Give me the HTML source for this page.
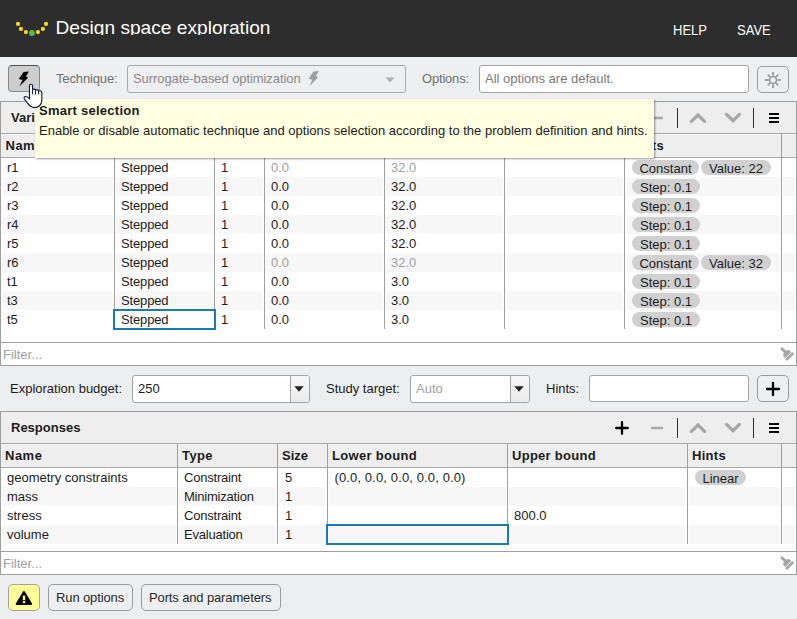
<!DOCTYPE html>
<html><head><meta charset="utf-8"><title>Design space exploration</title>
<style>
*{box-sizing:border-box;margin:0;padding:0}
html,body{width:797px;height:619px;overflow:hidden}
body{position:relative;background:#edeeef;font-family:"Liberation Sans",sans-serif;font-size:13px;color:#1c1c1c}
.abs{position:absolute}
.t{position:absolute;white-space:nowrap;line-height:16px;height:16px}
.g{color:#6f6f6f}
.dis{color:#a0a0a0}
#hdr{left:0;top:0;width:797px;height:57px;background:#2d2d2d}
#title{left:55.5px;top:16px;height:19px;line-height:24px;font-size:19.15px;color:#fff;overflow:hidden}
.hb{color:#fff;font-size:14px;transform:scaleX(0.93);transform-origin:0 0}
.btn{position:absolute;border:1px solid #a8a8a8;border-radius:4px;background:linear-gradient(#f7f7f7,#eaeaea)}
.inp{position:absolute;border:1px solid #a3a3a3;border-radius:3px;background:#fff}
.panel{position:absolute;left:0;width:797px;border:1px solid #9e9e9e;border-bottom:none;background:#fff}
.phead{position:absolute;left:0;top:0;width:795px;height:32px;background:#eeeeef;border-bottom:1px solid #a8a8a8}
.chead{position:absolute;left:0;top:32px;width:795px;height:24px;background:#eeeeef;border-bottom:1px solid #a8a8a8;border-top:1px solid #f6f6f6}
.flat{background:#eeeff0;border-color:#9c9c9c;border-radius:5px}
.b{font-weight:bold}
.row{position:absolute;left:1px;width:793px;height:19px}
.row>.t,.row>.pill{margin-left:-1px}
.vg{position:absolute;width:3px;background:#fff}
.alt{background:#f7f7f7}
.vs{position:absolute;width:1px;background:#a0a0a0}
.pill{position:absolute;height:15px;border-radius:8px;background:#d0d0d0;line-height:16px;padding-top:1px;text-align:center;white-space:nowrap}
.filter{position:absolute;left:0;width:797px;height:24px;border:1px solid #9e9e9e;background:#fff}
</style></head><body>
<div id="hdr" class="abs"></div>
<svg class="abs" style="left:10px;top:16px" width="44" height="24" viewBox="10 16 44 24"><g fill="#f9d825"><circle cx="18" cy="23.9" r="2.1"/><circle cx="20.95" cy="28.9" r="2.1"/><circle cx="25.9" cy="32.1" r="2.1"/><circle cx="37.97" cy="32.1" r="2.1"/><circle cx="42.9" cy="28.9" r="2.1"/><circle cx="46" cy="23.9" r="2.1"/></g><circle cx="31.95" cy="33.1" r="3" fill="#5cb849"/></svg>
<div id="title" class="t">Design space exploration</div>
<div class="t hb" style="left:673px;top:22px">HELP</div>
<div class="t hb" style="left:736.5px;top:22px">SAVE</div>
<div class="abs" style="left:0;top:57px;width:797px;height:44px;background:#eeeff0"></div>
<div class="btn" style="left:8px;top:65px;width:32px;height:27px;background:#cdcdcd;border-color:#555 #8a8a8a #8a8a8a #8a8a8a"></div>
<svg class="abs" style="left:0px;top:57px" width="50" height="40" viewBox="0 57 50 40"><path d="M23.6 71.9 L28.9 71.4 L26 76.4 L28.1 77.7 L19.4 86.5 L22.5 80 L18.7 79 Z" fill="#0a0a0a"/></svg>
<div class="t g" style="left:56px;top:71px;letter-spacing:-0.14px">Technique:</div>
<div class="inp" style="left:127px;top:65px;width:279px;height:28px;background:#eeeff0;border-color:#a8a8a8"></div>
<div class="t" style="left:133px;top:71px;color:#8a8a8a;letter-spacing:-0.08px">Surrogate-based optimization</div>
<svg class="abs" style="left:300px;top:65px" width="30" height="28" viewBox="10.1 65.3 30 28"><path d="M23.6 71.9 L28.9 71.4 L26 76.4 L28.1 77.7 L19.4 86.5 L22.5 80 L18.7 79 Z" fill="#9e9e9e"/></svg>
<svg class="abs" style="left:385px;top:77px" width="10" height="6" viewBox="0 0 10 6"><path d="M0.5 0.5 L9.5 0.5 L5 5.5 Z" fill="#b0b0b0"/></svg>
<div class="t g" style="left:422px;top:71px;letter-spacing:-0.19px">Options:</div>
<div class="inp" style="left:479px;top:65px;width:270px;height:28px"></div>
<div class="t" style="left:485px;top:71px;color:#7a7a7a">All options are default.</div>
<div class="btn flat" style="left:757px;top:66px;width:32px;height:27px"></div>
<svg class="abs" style="left:764px;top:71px" width="18" height="18" viewBox="-9 -9 18 18"><circle r="3.5" fill="none" stroke="#9a9a9a" stroke-width="1.7"/><line x1="4.30" y1="0.00" x2="8.00" y2="0.00" stroke="#9a9a9a" stroke-width="1.8"/><line x1="3.04" y1="3.04" x2="5.37" y2="5.37" stroke="#9a9a9a" stroke-width="1.8"/><line x1="0.00" y1="4.30" x2="0.00" y2="8.00" stroke="#9a9a9a" stroke-width="1.8"/><line x1="-3.04" y1="3.04" x2="-5.37" y2="5.37" stroke="#9a9a9a" stroke-width="1.8"/><line x1="-4.30" y1="0.00" x2="-8.00" y2="0.00" stroke="#9a9a9a" stroke-width="1.8"/><line x1="-3.04" y1="-3.04" x2="-5.37" y2="-5.37" stroke="#9a9a9a" stroke-width="1.8"/><line x1="-0.00" y1="-4.30" x2="-0.00" y2="-8.00" stroke="#9a9a9a" stroke-width="1.8"/><line x1="3.04" y1="-3.04" x2="5.37" y2="-5.37" stroke="#9a9a9a" stroke-width="1.8"/></svg>
<div class="panel" style="top:101px;height:242px">
<div class="phead"></div><div class="chead"></div>
<div class="t b" style="left:10px;top:8px">Variables</div>
<div class="t b" style="left:4.5px;top:36px;letter-spacing:0.5px">Name</div>
<div class="t b" style="left:629px;top:36px;letter-spacing:0.28px">Hints</div>
<div class="row" style="top:56px">
<div class="t" style="left:6px;top:2px">r1</div>
<div class="t" style="left:120px;top:2px;letter-spacing:-0.15px">Stepped</div>
<div class="t" style="left:220px;top:2px">1</div>
<div class="t dis" style="left:270px;top:2px">0.0</div>
<div class="t dis" style="left:390px;top:2px">32.0</div>
<div class="pill" style="left:631px;top:2px;width:67px">Constant</div>
<div class="pill" style="left:700px;top:2px;width:70px">Value: 22</div>
</div>
<div class="row alt" style="top:75px">
<div class="t" style="left:6px;top:2px">r2</div>
<div class="t" style="left:120px;top:2px;letter-spacing:-0.15px">Stepped</div>
<div class="t" style="left:220px;top:2px">1</div>
<div class="t" style="left:270px;top:2px">0.0</div>
<div class="t" style="left:390px;top:2px">32.0</div>
<div class="pill" style="left:631px;top:2px;width:68px">Step: 0.1</div>
</div>
<div class="row" style="top:94px">
<div class="t" style="left:6px;top:2px">r3</div>
<div class="t" style="left:120px;top:2px;letter-spacing:-0.15px">Stepped</div>
<div class="t" style="left:220px;top:2px">1</div>
<div class="t" style="left:270px;top:2px">0.0</div>
<div class="t" style="left:390px;top:2px">32.0</div>
<div class="pill" style="left:631px;top:2px;width:68px">Step: 0.1</div>
</div>
<div class="row alt" style="top:113px">
<div class="t" style="left:6px;top:2px">r4</div>
<div class="t" style="left:120px;top:2px;letter-spacing:-0.15px">Stepped</div>
<div class="t" style="left:220px;top:2px">1</div>
<div class="t" style="left:270px;top:2px">0.0</div>
<div class="t" style="left:390px;top:2px">32.0</div>
<div class="pill" style="left:631px;top:2px;width:68px">Step: 0.1</div>
</div>
<div class="row" style="top:132px">
<div class="t" style="left:6px;top:2px">r5</div>
<div class="t" style="left:120px;top:2px;letter-spacing:-0.15px">Stepped</div>
<div class="t" style="left:220px;top:2px">1</div>
<div class="t" style="left:270px;top:2px">0.0</div>
<div class="t" style="left:390px;top:2px">32.0</div>
<div class="pill" style="left:631px;top:2px;width:68px">Step: 0.1</div>
</div>
<div class="row alt" style="top:151px">
<div class="t" style="left:6px;top:2px">r6</div>
<div class="t" style="left:120px;top:2px;letter-spacing:-0.15px">Stepped</div>
<div class="t" style="left:220px;top:2px">1</div>
<div class="t dis" style="left:270px;top:2px">0.0</div>
<div class="t dis" style="left:390px;top:2px">32.0</div>
<div class="pill" style="left:631px;top:2px;width:67px">Constant</div>
<div class="pill" style="left:700px;top:2px;width:70px">Value: 32</div>
</div>
<div class="row" style="top:170px">
<div class="t" style="left:6px;top:2px">t1</div>
<div class="t" style="left:120px;top:2px;letter-spacing:-0.15px">Stepped</div>
<div class="t" style="left:220px;top:2px">1</div>
<div class="t" style="left:270px;top:2px">0.0</div>
<div class="t" style="left:390px;top:2px">3.0</div>
<div class="pill" style="left:631px;top:2px;width:68px">Step: 0.1</div>
</div>
<div class="row alt" style="top:189px">
<div class="t" style="left:6px;top:2px">t3</div>
<div class="t" style="left:120px;top:2px;letter-spacing:-0.15px">Stepped</div>
<div class="t" style="left:220px;top:2px">1</div>
<div class="t" style="left:270px;top:2px">0.0</div>
<div class="t" style="left:390px;top:2px">3.0</div>
<div class="pill" style="left:631px;top:2px;width:68px">Step: 0.1</div>
</div>
<div class="row" style="top:208px">
<div class="t" style="left:6px;top:2px">t5</div>
<div class="t" style="left:120px;top:2px;letter-spacing:-0.15px">Stepped</div>
<div class="t" style="left:220px;top:2px">1</div>
<div class="t" style="left:270px;top:2px">0.0</div>
<div class="t" style="left:390px;top:2px">3.0</div>
<div class="pill" style="left:631px;top:2px;width:68px">Step: 0.1</div>
</div>
<div class="vg" style="left:112px;top:56px;height:171px"></div>
<div class="vs" style="left:113px;top:32px;height:195px"></div>
<div class="vg" style="left:212px;top:56px;height:171px"></div>
<div class="vs" style="left:213px;top:32px;height:195px"></div>
<div class="vg" style="left:262px;top:56px;height:171px"></div>
<div class="vs" style="left:263px;top:32px;height:195px"></div>
<div class="vg" style="left:382px;top:56px;height:171px"></div>
<div class="vs" style="left:383px;top:32px;height:195px"></div>
<div class="vg" style="left:502px;top:56px;height:171px"></div>
<div class="vs" style="left:503px;top:32px;height:195px"></div>
<div class="vg" style="left:622px;top:56px;height:171px"></div>
<div class="vs" style="left:623px;top:32px;height:195px"></div>
<div class="vg" style="left:779px;top:56px;height:171px"></div>
<div class="vs" style="left:780px;top:32px;height:195px"></div>
<div class="abs" style="left:112px;top:207px;width:103px;height:21px;border:2px solid #1a7ab3;box-shadow:inset 0 0 0 1px #fff"></div>
<svg class="abs" style="left:600px;top:0px" width="195" height="32" viewBox="600 0 195 32"><path d="M621 10.2 V21.8 M615.2 16 H626.8" stroke="#000" stroke-width="2.3" stroke-linecap="round" fill="none"/><path d="M651 16 H661" stroke="#a8a8a8" stroke-width="2.4" stroke-linecap="round" fill="none"/><rect x="676" y="6" width="1" height="20" fill="#2a2a2a"/><path d="M690.4 19.3 L697 13 L703.6 19.3" stroke="#a6a6a6" stroke-width="3.2" stroke-linecap="round" fill="none"/><path d="M725.55 12.4 L732 18.75 L738.45 12.4" stroke="#a6a6a6" stroke-width="3.2" stroke-linecap="round" fill="none"/><rect x="752" y="6" width="1" height="20" fill="#2a2a2a"/><rect x="768" y="11" width="10" height="2" fill="#000"/><rect x="768" y="15" width="10" height="2" fill="#000"/><rect x="768" y="19" width="10" height="2" fill="#000"/></svg>
</div>
<div class="filter" style="top:342px"></div>
<div class="t" style="left:3px;top:347px;color:#a0a0a0">Filter...</div>
<svg class="abs" style="left:770px;top:342px" width="27" height="24" viewBox="770 342 27 24"><g transform="translate(781.1 347.9) rotate(-45)" fill="#a6a6a6"><path d="M-1.4 0 H1.4 V5.2 L4.2 7 V10 H-4.2 V7 L-1.4 5.2 Z"/><rect x="-5" y="10.7" width="10" height="2.9"/></g></svg>
<div class="t" style="left:10px;top:381px">Exploration budget:</div>
<div class="inp" style="left:132px;top:375px;width:178px;height:28px"></div>
<div class="abs" style="left:290px;top:376px;width:19px;height:26px;border-left:1px solid #a3a3a3;background:linear-gradient(#f7f7f7,#ebebeb);border-radius:0 3px 3px 0"></div>
<svg class="abs" style="left:294px;top:386px" width="10" height="6" viewBox="0 0 10 6"><path d="M0.3 0.3 L9.7 0.3 L5 5.7 Z" fill="#222"/></svg>
<div class="t" style="left:138px;top:381px">250</div>
<div class="t" style="left:326px;top:381px">Study target:</div>
<div class="inp" style="left:410px;top:375px;width:120px;height:28px"></div>
<div class="abs" style="left:510px;top:376px;width:19px;height:26px;border-left:1px solid #a3a3a3;background:linear-gradient(#f7f7f7,#ebebeb);border-radius:0 3px 3px 0"></div>
<svg class="abs" style="left:514px;top:386px" width="10" height="6" viewBox="0 0 10 6"><path d="M0.3 0.3 L9.7 0.3 L5 5.7 Z" fill="#222"/></svg>
<div class="t" style="left:416px;top:381px;color:#a0a0a0">Auto</div>
<div class="t" style="left:546px;top:381px">Hints:</div>
<div class="inp" style="left:589px;top:375px;width:160px;height:27px"></div>
<div class="btn flat" style="left:757px;top:375px;width:32px;height:27px"></div>
<svg class="abs" style="left:763px;top:379px" width="20" height="20" viewBox="0 0 20 20"><path d="M10 4 V16 M4 10 H16" stroke="#000" stroke-width="2.3" stroke-linecap="round" fill="none"/></svg>
<div class="panel" style="top:411px;height:141px">
<div class="phead"></div><div class="chead"></div>
<div class="t b" style="left:10px;top:8px">Responses</div>
<div class="t b" style="left:4px;top:36px;letter-spacing:0.5px">Name</div>
<div class="t b" style="left:181px;top:36px;letter-spacing:0.4px">Type</div>
<div class="t b" style="left:281px;top:36px;letter-spacing:0px">Size</div>
<div class="t b" style="left:331px;top:36px;letter-spacing:0.3px">Lower bound</div>
<div class="t b" style="left:511px;top:36px;letter-spacing:0.28px">Upper bound</div>
<div class="t b" style="left:691px;top:36px;letter-spacing:0.28px">Hints</div>
<div class="row" style="top:56px">
<div class="t" style="left:6px;top:2px">geometry constraints</div>
<div class="t" style="left:183px;top:2px;letter-spacing:-0.21px">Constraint</div>
<div class="t" style="left:284px;top:2px">5</div>
<div class="t" style="left:333.5px;top:2px;letter-spacing:0.125px">(0.0, 0.0, 0.0, 0.0, 0.0)</div>
<div class="pill" style="left:694px;top:2px;width:51px">Linear</div>
</div>
<div class="row alt" style="top:75px">
<div class="t" style="left:6px;top:2px">mass</div>
<div class="t" style="left:183px;top:2px;letter-spacing:-0.21px">Minimization</div>
<div class="t" style="left:284px;top:2px">1</div>
</div>
<div class="row" style="top:94px">
<div class="t" style="left:6px;top:2px">stress</div>
<div class="t" style="left:183px;top:2px;letter-spacing:-0.21px">Constraint</div>
<div class="t" style="left:284px;top:2px">1</div>
<div class="t" style="left:513px;top:2px">800.0</div>
</div>
<div class="row alt" style="top:113px">
<div class="t" style="left:6px;top:2px">volume</div>
<div class="t" style="left:183px;top:2px;letter-spacing:-0.21px">Evaluation</div>
<div class="t" style="left:284px;top:2px">1</div>
</div>
<div class="vg" style="left:175px;top:56px;height:76px"></div>
<div class="vs" style="left:176px;top:32px;height:100px"></div>
<div class="vg" style="left:275px;top:56px;height:76px"></div>
<div class="vs" style="left:276px;top:32px;height:100px"></div>
<div class="vg" style="left:325px;top:56px;height:76px"></div>
<div class="vs" style="left:326px;top:32px;height:100px"></div>
<div class="vg" style="left:505px;top:56px;height:76px"></div>
<div class="vs" style="left:506px;top:32px;height:100px"></div>
<div class="vg" style="left:685px;top:56px;height:76px"></div>
<div class="vs" style="left:686px;top:32px;height:100px"></div>
<div class="vg" style="left:779px;top:56px;height:76px"></div>
<div class="vs" style="left:780px;top:32px;height:100px"></div>
<div class="abs" style="left:325px;top:112px;width:183px;height:21px;border:2px solid #1a7ab3;box-shadow:inset 0 0 0 1px #fff"></div>
<svg class="abs" style="left:600px;top:0px" width="195" height="32" viewBox="600 0 195 32"><path d="M621 10.2 V21.8 M615.2 16 H626.8" stroke="#000" stroke-width="2.3" stroke-linecap="round" fill="none"/><path d="M651 16 H661" stroke="#a8a8a8" stroke-width="2.4" stroke-linecap="round" fill="none"/><rect x="676" y="6" width="1" height="20" fill="#2a2a2a"/><path d="M690.4 19.3 L697 13 L703.6 19.3" stroke="#a6a6a6" stroke-width="3.2" stroke-linecap="round" fill="none"/><path d="M725.55 12.4 L732 18.75 L738.45 12.4" stroke="#a6a6a6" stroke-width="3.2" stroke-linecap="round" fill="none"/><rect x="752" y="6" width="1" height="20" fill="#2a2a2a"/><rect x="768" y="11" width="10" height="2" fill="#000"/><rect x="768" y="15" width="10" height="2" fill="#000"/><rect x="768" y="19" width="10" height="2" fill="#000"/></svg>
</div>
<div class="filter" style="top:551px"></div>
<div class="t" style="left:3px;top:556px;color:#a0a0a0">Filter...</div>
<svg class="abs" style="left:770px;top:551px" width="27" height="24" viewBox="770 551 27 24"><g transform="translate(781.1 556.9) rotate(-45)" fill="#a6a6a6"><path d="M-1.4 0 H1.4 V5.2 L4.2 7 V10 H-4.2 V7 L-1.4 5.2 Z"/><rect x="-5" y="10.7" width="10" height="2.9"/></g></svg>
<div class="btn" style="left:8px;top:584px;width:32px;height:27px;background:#ffff99;border-color:#a2a2a2;border-radius:5px"></div>
<svg class="abs" style="left:15px;top:590px" width="18" height="16" viewBox="0 0 18 16"><path d="M8.95 2 L16.2 14 L1.7 14 Z" fill="#000" stroke="#000" stroke-width="2" stroke-linejoin="round"/><rect x="7.8" y="5.6" width="2.4" height="4.6" fill="#ffff99"/><rect x="7.8" y="11.1" width="2.4" height="2.1" fill="#ffff99"/></svg>
<div class="btn flat" style="left:48px;top:584px;width:85px;height:27px"></div>
<div class="t" style="left:56px;top:590px;color:#2a2a2a;letter-spacing:-0.12px">Run options</div>
<div class="btn flat" style="left:141px;top:584px;width:140px;height:27px"></div>
<div class="t" style="left:149px;top:590px;color:#2a2a2a;letter-spacing:-0.135px">Ports and parameters</div>
<div class="abs" style="left:35px;top:99px;width:619px;height:59px;background:#ffffe1;border:1px solid #fdfdf6;box-shadow:1px 1px 2px rgba(0,0,0,0.4)"></div>
<div class="t b" style="left:39px;top:103px;letter-spacing:0.26px">Smart selection</div>
<div class="t" style="left:39px;top:123px">Enable or disable automatic technique and options selection according to the problem definition and hints.</div>
<svg class="abs" style="left:15px;top:78px" width="40" height="34" viewBox="0 0 40 34"><path d="M14.5 8 C14.5 5.7 17.6 5.7 17.6 8 L17.6 11.6 C18.6 10.8 20.4 11 20.5 12.2 C21.5 11.5 23.4 11.7 23.6 13 C24.8 12.4 26.8 12.9 26.8 14.6 L26.8 22.5 C26.8 27 23 29.6 19.5 29.6 C16 29.6 14 27.2 12.5 25.2 L9.6 21.2 C8.4 19.6 9.6 18.2 11 18.5 C12.5 18.8 13.4 19.8 14.5 20.8 Z" fill="#fff" stroke="#12152e" stroke-width="1.1" stroke-linejoin="round"/><path d="M17.6 11.6 V16.4 M20.5 12.2 V16.4 M23.6 13 V16.4" stroke="#12152e" stroke-width="1" fill="none"/></svg>
</body></html>
